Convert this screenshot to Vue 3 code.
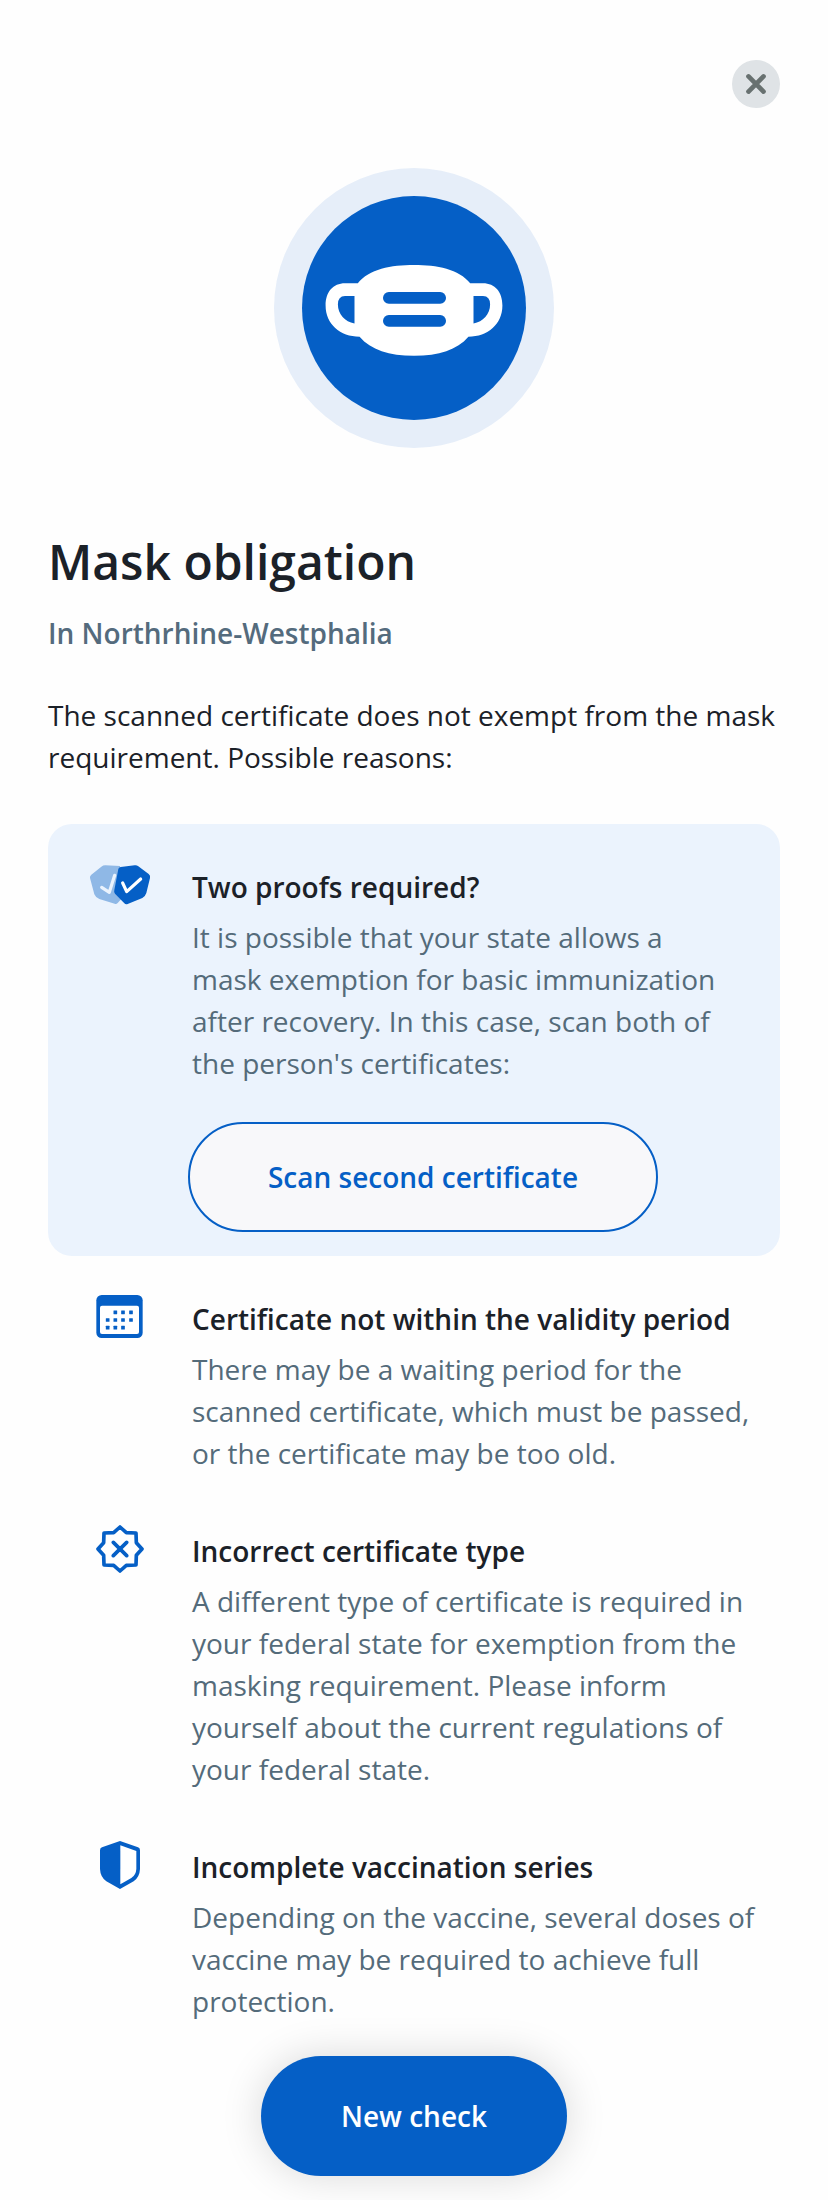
<script setup>
const reasons = [
  {
    icon: 'calendar',
    title: 'Certificate not within the validity period',
    text: 'There may be a waiting period for the scanned certificate, which must be passed, or the certificate may be too old.',
  },
  {
    icon: 'badge',
    title: 'Incorrect certificate type',
    text: 'A different type of certificate is required in your federal state for exemption from the masking requirement. Please inform yourself about the current regulations of your federal state.',
  },
  {
    icon: 'shield',
    title: 'Incomplete vaccination series',
    text: 'Depending on the vaccine, several doses of vaccine may be required to achieve full protection.',
  },
]

const dots = [
  [91, 97], [114, 97], [138, 97],
  [68, 120], [91, 120], [114, 120], [138, 120],
  [68, 143], [91, 143], [114, 143],
]
</script>

<template>
  <main class="sheet">
    <header class="bar">
      <button class="close" aria-label="Close">
        <svg viewBox="0 0 48 48" width="48" height="48">
          <path d="M16.500 16.400 31.500 31.600M31.500 16.400 16.500 31.600" fill="none" stroke="#687170" stroke-width="4.700" stroke-linecap="round" />
        </svg>
      </button>
    </header>

    <svg class="hero" viewBox="0 0 280 280" width="280" height="280">
      <circle cx="140" cy="140" r="140" fill="#e6eef9" />
      <circle cx="140" cy="140" r="112" fill="#055fc6" />
      <path
        fill="#fff"
        fill-rule="evenodd"
        d="M83.800 115.300C95 101 117 97 140 97s45 4 56.200 18.300H209C221 115.300 228.400 124 228.400 137.500C228.400 156 214 168.700 194.400 168.700C183 182 165 187.700 140 187.700s-43-5.700-54.400-19C66 168.700 51.600 156 51.600 137.500C51.600 124 59 115.300 71 115.300ZM80.500 128H71Q63.900 128 63.900 136.500C63.900 146 71 153.800 80.500 155.500ZM199.500 128H209Q216.100 128 216.100 136.500C216.100 146 209 153.800 199.500 155.500Z"
      />
      <rect x="109" y="124" width="63" height="11.700" rx="5.800" fill="#055fc6" />
      <rect x="109" y="147" width="63" height="11.700" rx="5.800" fill="#055fc6" />
    </svg>

    <h1>Mask obligation</h1>
    <h2>In Northrhine-Westphalia</h2>
    <p class="intro">The scanned certificate does not exempt from the mask requirement. Possible reasons:</p>

    <section class="item card">
      <div class="icon">
        <svg viewBox="12 33 216 144" width="72" height="48">
          <path d="M76 46 120 48 130 140 113 159Q109 163 104 161L58 147Q47 143 43 133L30 84Q29 78 34 74L64 50Q69 46 76 46Z" fill="#8fb8e6" />
          <path d="M65 112 88 127 104 76" fill="none" stroke="#ebf3fd" stroke-width="9.500" stroke-linecap="round" stroke-linejoin="round" />
          <path d="M122 51 164 46Q170 45 175 49L206 72Q212 77 210 84L199 129Q196 139 187 144L143 162Q137 164 133 160L105 131Q101 127 103 120L115 57Q116 52 122 51Z" fill="#055fc6" />
          <path d="M128 99 140 125 182 87" fill="none" stroke="#fff" stroke-width="9.500" stroke-linecap="round" stroke-linejoin="round" />
        </svg>
      </div>
      <div class="copy">
        <h3>Two proofs required?</h3>
        <p>It is possible that your state allows a mask exemption for basic immunization after recovery. In this case, scan both of the person's certificates:</p>
        <button class="outline">Scan second certificate</button>
      </div>
    </section>

    <section v-for="reason in reasons" :key="reason.icon" class="item">
      <div class="icon">
        <svg v-if="reason.icon === 'calendar'" viewBox="33 39 144 144" width="48" height="48">
          <rect x="34" y="45" width="139" height="129" rx="16" fill="#055fc6" />
          <rect x="45" y="77" width="117" height="85" rx="6" fill="#fff" />
          <rect v-for="([x, y], i) in dots" :key="i" :x="x - 5.500" :y="y - 5.500" width="11" height="11" rx="1" fill="#055fc6" />
        </svg>
        <svg v-else-if="reason.icon === 'badge'" viewBox="33 30 144 144" width="48" height="48">
          <path
            d="M105 36 124 53 153 54 154 83 171 102 154 121 153 150 124 151 105 168 86 151 57 150 56 121 39 102 56 83 57 54 86 53ZM85 82 125 122M125 82 85 122"
            fill="none" stroke="#055fc6" stroke-width="11" stroke-linecap="round" stroke-linejoin="round"
          />
        </svg>
        <svg v-else viewBox="33 33 144 144" width="48" height="48">
          <path d="M105 33 159 52Q165 54 165 61V117Q164 141 146 154L105 177 64 154Q46 141 45 117V61Q45 54 51 52Z" fill="#055fc6" />
          <path d="M106 46 154 63V117Q153 135 139 144L106 163Z" fill="#fff" />
        </svg>
      </div>
      <div class="copy">
        <h3>{{ reason.title }}</h3>
        <p>{{ reason.text }}</p>
      </div>
    </section>

    <footer class="actions">
      <button class="primary">New check</button>
    </footer>
  </main>
</template>

<style>
body {
  margin: 0;
  background: #fefefe;
}
</style>

<style scoped>
.sheet {
  box-sizing: border-box;
  width: 828px;
  height: 2200px;
  padding: 60px 48px 0;
  overflow: hidden;
  display: flex;
  flex-direction: column;
  background: #fefefe;
  color: #1b2128;
  font: 400 28px/42px "Open Sans", sans-serif;
}
h1, h2, h3, p { margin: 0; }
button {
  margin: 0;
  padding: 0;
  border: 0;
  font: 600 28px/42px "Open Sans", sans-serif;
}
svg { display: block; }
.bar {
  display: flex;
  justify-content: flex-end;
  margin-bottom: 60px;
}
.close {
  width: 48px;
  height: 48px;
  border-radius: 50%;
  background: #dfe3e6;
}
.hero {
  align-self: center;
  flex: none;
  margin-bottom: 82px;
}
h1 {
  font-size: 48px;
  line-height: 64px;
  font-weight: 600;
  margin-bottom: 18px;
}
h2 {
  font-size: 28px;
  font-weight: 600;
  color: #546b7d;
}
.intro { margin: 40px 0 46px; }
.item {
  display: grid;
  grid-template-columns: 144px 1fr;
  padding: 42px 24px 14px 0;
}
.card {
  padding: 42px 48px 24px 0;
  border-radius: 24px;
  background: #ebf3fd;
}
.icon {
  display: flex;
  justify-content: center;
  align-items: flex-start;
  margin-top: -5px;
}
.copy h3 {
  font-size: 28px;
  font-weight: 600;
  margin-bottom: 8px;
}
.copy p { color: #546b7a; }
.outline {
  box-sizing: border-box;
  width: 470px;
  height: 110px;
  margin: 38px 0 0 -4px;
  border: 2px solid #055fc6;
  border-radius: 55px;
  background: #f8f8fa;
  color: #055fc6;
  display: block;
}
.actions {
  display: flex;
  justify-content: center;
  margin-top: 20px;
}
.primary {
  width: 306px;
  height: 120px;
  border-radius: 60px;
  background: #055fc6;
  color: #fff;
  box-shadow: 0 0 40px rgba(0, 0, 0, 0.15);
}
</style>
